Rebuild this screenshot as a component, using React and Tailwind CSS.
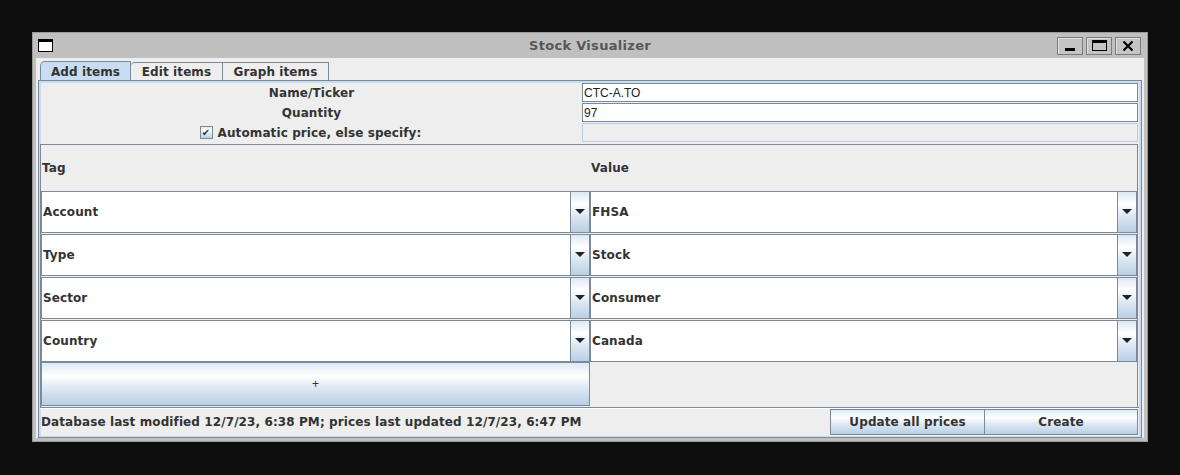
import React from 'react';

const grad = 'bg-[linear-gradient(to_bottom,#dde8f3_0%,#ffffff_30%,#dde8f3_60%,#b8cfe5_100%)]';

function Arrow() {
    return (
        <svg width="10" height="6" viewBox="0 0 10 6">
            <path d="M0 0H10L5 5Z" fill="#222" />
        </svg>
    );
}

function Combo({ value }) {
    return (
        <div className="h-[42px] flex border border-[#7a8a99] bg-white">
            <div className="flex-1 flex items-center pl-[1px] text-[12px] font-bold tracking-[0.1px] text-[#333]">{value}</div>
            <div className={`w-[19px] flex items-center justify-center border-l border-[#7a8a99] ${grad}`}>
                <Arrow />
            </div>
        </div>
    );
}

function WinButton({ children }) {
    return (
        <div className="w-[26px] h-[18px] border border-[#7b7b7b] bg-[#c4c4c4] flex items-center justify-center shadow-[inset_1px_1px_0_#e0e0e0]">
            {children}
        </div>
    );
}

const rows = [
    ['Account', 'FHSA'],
    ['Type', 'Stock'],
    ['Sector', 'Consumer'],
    ['Country', 'Canada'],
];

export default function App() {
    return (
        <div className="w-[1180px] h-[475px] bg-[#0e0e0e] pt-[32px] pl-[32px]" style={{ fontFamily: '"DejaVu Sans", sans-serif' }}>
            <div className="w-[1116px] h-[410px] bg-[#c0c0c0] border border-[#9a9a9a] flex flex-col px-[3px] pb-[3px]">
                {/* Title bar */}
                <div className="h-[25px] relative flex items-center">
                    <div className="ml-[2px] w-[15px] h-[13px] bg-white border border-black border-t-[3px]" />
                    <div className="absolute inset-0 flex items-center justify-center text-[13px] font-bold tracking-[0.3px] text-[#575757]">
                        Stock Visualizer
                    </div>
                    <div className="ml-auto mr-[3px] flex gap-[3px] relative">
                        <WinButton>
                            <div className="w-[10px] h-[3px] bg-black mt-[8px]" />
                        </WinButton>
                        <WinButton>
                            <div className="w-[15px] h-[11px] border border-black border-t-[3px]" />
                        </WinButton>
                        <WinButton>
                            <svg width="12" height="12" viewBox="0 0 12 12">
                                <path d="M1.5 1.5L10.5 10.5M10.5 1.5L1.5 10.5" stroke="#000" strokeWidth="2.2" />
                            </svg>
                        </WinButton>
                    </div>
                </div>

                {/* Content */}
                <div className="flex-1 bg-[#eeeeee] flex flex-col pl-[2px] pr-[2px] pt-[3px]">
                    {/* Tabs */}
                    <div className="flex pl-[2px] h-[19px] items-end text-[12px] font-bold tracking-[0.1px] text-[#333]">
                        <div className="h-[19px] w-[91px] bg-[#c8ddf2] border border-b-0 border-[#7a8a99] rounded-tl-[5px] flex items-center justify-center pt-[1px]">
                            Add items
                        </div>
                        <div className="h-[18px] w-[92px] border border-b-0 border-l-0 border-[#7a8a99] rounded-tl-[4px] flex items-center justify-center pt-[1px]">
                            Edit items
                        </div>
                        <div className="h-[18px] w-[106px] border border-b-0 border-l-0 border-[#7a8a99] flex items-center justify-center pt-[1px]">
                            Graph items
                        </div>
                    </div>

                    {/* Panel */}
                    <div className="flex-1 border border-[#7a8a99] bg-[#c8ddf2] px-[2px] pt-[2px] pb-[1px] flex">
                        <div className="flex-1 bg-[#eeeeee] flex flex-col">
                            {/* Form */}
                            <div className="grid grid-cols-[541px_1fr] gap-y-[1px] pr-[1px] text-[12px] text-[#333]">
                                <div className="h-[19px] flex items-center justify-center font-bold tracking-[0.1px]">Name/Ticker</div>
                                <div className="h-[19px] bg-white border border-[#7a8a99] flex items-center pl-[1px] text-[12px] text-[#222]" style={{ fontFamily: '"Liberation Sans", sans-serif' }}>
                                    CTC-A.TO
                                </div>
                                <div className="h-[19px] flex items-center justify-center font-bold tracking-[0.1px]">Quantity</div>
                                <div className="h-[19px] bg-white border border-[#7a8a99] flex items-center pl-[1px] text-[12px] text-[#222]" style={{ fontFamily: '"Liberation Sans", sans-serif' }}>
                                    97
                                </div>
                                <div className="h-[19px] flex items-center justify-center font-bold tracking-[0.1px] gap-[5px] pr-[2px]">
                                    <div className={`w-[13px] h-[13px] border border-[#7a8a99] ${grad} flex items-center justify-center text-[10px] leading-none text-[#333]`}>
                                        ✔
                                    </div>
                                    Automatic price, else specify:
                                </div>
                                <div className="h-[19px] bg-[#eeeeee] border border-[#b8cfe5]" />
                            </div>

                            {/* Table */}
                            <div className="mt-[2px] mr-[1px] -ml-[1px] border-t border-l border-r border-[#7a8a99] flex-1 flex flex-col">
                                <div className="grid grid-cols-[549px_1fr] h-[46px] items-center text-[12px] font-bold tracking-[0.1px] text-[#333]">
                                    <div className="pl-[1px]">Tag</div>
                                    <div className="pl-[1px]">Value</div>
                                </div>
                                <div className="grid grid-cols-[549px_1fr] gap-y-[1px]">
                                    {rows.map(([tag, val]) => (
                                        <React.Fragment key={tag}>
                                            <Combo value={tag} />
                                            <Combo value={val} />
                                        </React.Fragment>
                                    ))}
                                </div>
                                <div className="grid grid-cols-[549px_1fr]">
                                    <div className={`h-[44px] border border-[#7a8a99] ${grad} flex items-center justify-center text-[12px] text-[#333]`} style={{ fontFamily: '"Liberation Sans", sans-serif' }}>
                                        +
                                    </div>
                                    <div />
                                </div>
                            </div>

                            {/* Status bar */}
                            <div className="border-t border-[#7a8a99] shadow-[inset_0_1px_0_#ffffff] h-[29px] flex items-center -ml-[1px]">
                                <div className="flex-1 text-[12px] font-bold tracking-[0.1px] text-[#333] pl-[1px]">
                                    Database last modified 12/7/23, 6:38 PM; prices last updated 12/7/23, 6:47 PM
                                </div>
                                <div className="flex self-start mt-[1px] mr-[1px]">
                                    <div className={`w-[155px] h-[26px] border border-[#7a8a99] ${grad} flex items-center justify-center text-[12px] font-bold tracking-[0.1px] text-[#333]`}>
                                        Update all prices
                                    </div>
                                    <div className={`w-[153px] h-[26px] border border-l-0 border-[#7a8a99] ${grad} flex items-center justify-center text-[12px] font-bold tracking-[0.1px] text-[#333]`}>
                                        Create
                                    </div>
                                </div>
                            </div>
                        </div>
                    </div>
                </div>
            </div>
        </div>
    );
}
